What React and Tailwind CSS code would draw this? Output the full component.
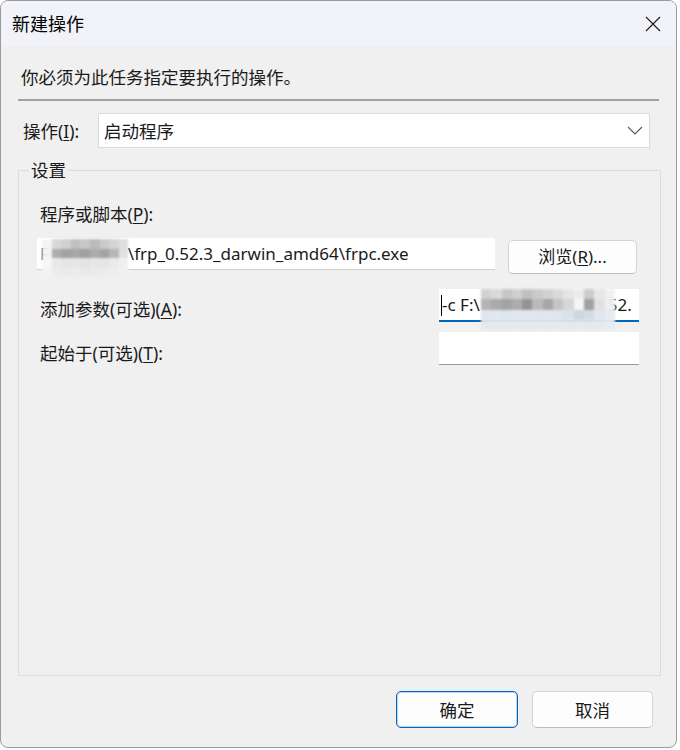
import React from "react";

const F = { fontFamily: '"Noto Sans", "Noto Sans CJK SC", sans-serif' };

function U({ children }) {
  return <span className="underline underline-offset-2 decoration-1">{children}</span>;
}

function Mosaic({ cells, cols, size }) {
  return (
    <div className="grid blur-[1px]" style={{ gridTemplateColumns: `repeat(${cols}, ${size}px)` }}>
      {cells.map((c, i) => (
        <div key={i} style={{ width: size, height: size, background: c }} />
      ))}
    </div>
  );
}

const pathCells = [
  "#f4f4f4", "#d6d6d6", "#cfcfcf", "#bdbdbd", "#c4c4c4", "#b8b8b8", "#c8c8c8", "#d2d2d2", "#dcdcdc",
  "#f2f2f2", "#a9a9a9", "#9e9e9e", "#a4a4a4", "#9b9b9b", "#a8a8a8", "#9f9f9f", "#b4b4b4", "#e0e0e0",
  "#f6f6f6", "#e8e8e8", "#e4e4e4", "#e6e6e6", "#e2e2e2", "#e6e6e6", "#e4e4e4", "#e9e9e9", "#f0f0f0",
  "#f3f3f3", "#ececec", "#ebebeb", "#ececec", "#eaeaea", "#ebebeb", "#ececec", "#eeeeee", "#f1f1f1",
];

const argCells = [
  "#cfcfcf", "#d8d8d8", "#c4c4c4", "#cdcdcd", "#bdbdbd", "#c8c8c8", "#d0d0d0", "#d8d8d8", "#e4e4e4", "#ececec", "#c9c9c9", "#e6e6e6", "#f0f0f0",
  "#b0b0b0", "#a6a6a6", "#9f9f9f", "#a9a9a9", "#8f8f8f", "#b7b7b7", "#a2a2a2", "#c2c2c2", "#d4d4d4", "#f6f6f6", "#9c9c9c", "#e0e0e0", "#f0f0f0",
  "#dde5ee", "#dfe6ef", "#dce4ee", "#e0e7ef", "#dfe6ee", "#dee5ee", "#e0e7ef", "#dde4ed", "#d8e0ea", "#ccd4de", "#d2dbe6", "#e0e6ee", "#e6ebf1",
  "#e6e8eb", "#e7e9ec", "#e6e8eb", "#e7e9ec", "#e6e8eb", "#e7e9ec", "#e6e8eb", "#e7e9ec", "#e6e8eb", "#e7e9ec", "#e6e8eb", "#e7e9ec", "#e9ebee",
];

export default function App() {
  return (
    <div className="w-[680px] h-[750px] bg-white text-[#1a1a1a]" style={F}>
      <div className="w-[677px] h-[748px] border border-[#9a9a9a] rounded-[8px] overflow-hidden flex flex-col bg-[#f0f0f0]">
        {/* title bar */}
        <div className="h-[45px] shrink-0 bg-[#f2f3f8] flex items-center justify-between pl-[11px] pr-[14px]">
          <span className="text-[18px] leading-[24px] text-black">新建操作</span>
          <svg width="16" height="16" viewBox="0 0 16 16" className="mr-[1px]">
            <path d="M1 1 L15 15 M15 1 L1 15" stroke="#1a1a1a" strokeWidth="1.1" fill="none" />
          </svg>
        </div>

        {/* body */}
        <div className="flex-1 flex flex-col pl-[17px] pr-[17px]">
          <div className="mt-[19px] ml-[3px] text-[17.5px] leading-[24px]">你必须为此任务指定要执行的操作。</div>
          <div className="mt-[10px] h-[2px] bg-[#a2a2a2] w-[641px]" />

          <div className="mt-[12px] flex items-center">
            <span className="ml-[5px] w-[75px] text-[17.5px] leading-[24px]">操作(<U>I</U>):</span>
            <div className="w-[552px] h-[35px] bg-white border border-[#dadada] flex items-center justify-between pl-[5px] pr-[6px]">
              <span className="text-[17.5px] leading-[24px]">启动程序</span>
              <svg width="16" height="9" viewBox="0 0 16 9">
                <path d="M1 1 L8 8 L15 1" stroke="#5a5a5a" strokeWidth="1.1" fill="none" />
              </svg>
            </div>
          </div>

          {/* group box */}
          <div className="relative mt-[22px] w-[643px] h-[506px] border border-[#dcdcdc] flex flex-col">
            <span className="absolute -top-[13px] left-[10px] bg-[#f0f0f0] px-[2px] text-[17.5px] leading-[24px]">设置</span>

            <div className="mt-[31px] ml-[21px] text-[17.5px] leading-[24px]">程序或脚本(<U>P</U>):</div>

            <div className="mt-[12px] ml-[18px] flex items-start">
              <div className="relative w-[458px] h-[32px] bg-white border-b border-[#cfcfcf] flex items-center pl-[3px] overflow-visible">
                <span className="text-[17px] leading-[24px] whitespace-nowrap">
                  F<span className="inline-block w-[79px]" />\frp_0.52.3_darwin_amd64\frpc.exe
                </span>
                <div className="absolute left-[5px] top-[1px] opacity-95">
                  <Mosaic cells={pathCells} cols={9} size={9.6} />
                </div>
              </div>
              <button className="ml-[13px] mt-[2px] w-[129px] h-[34px] rounded-[5px] bg-[#fdfdfd] border border-[#d3d3d3] border-b-[#bcbcbc] text-[17px] leading-[24px]">
                浏览(<U>R</U>)...
              </button>
            </div>

            <div className="mt-[15px] flex items-start justify-between pl-[21px] pr-[21px]">
              <span className="mt-[8px] text-[17.5px] leading-[24px]">添加参数(可选)(<U>A</U>):</span>
              <div className="relative w-[200px] h-[33px] bg-white border-b-2 border-[#0067c0] flex items-center pl-[3px] overflow-hidden">
                <span className="absolute left-[2px] top-[6px] w-[1px] h-[21px] bg-black" />
                <span className="text-[17px] leading-[24px] whitespace-nowrap">
                  -c F:\<span className="inline-block w-[128px]" />52.
                </span>
              </div>
            </div>
            <div className="relative h-0">
              <div className="absolute left-[462px] -top-[33px] opacity-95">
                <Mosaic cells={argCells} cols={13} size={10.3} />
              </div>
            </div>

            <div className="mt-[10px] flex items-start justify-between pl-[21px] pr-[21px]">
              <span className="mt-[9px] text-[17.5px] leading-[24px]">起始于(可选)(<U>T</U>):</span>
              <div className="w-[200px] h-[33px] bg-white border-b border-[#9a9a9a]" />
            </div>
          </div>

          <div className="mt-[15px] flex justify-end gap-[14px] pr-[6px]">
            <button className="w-[122px] h-[37px] rounded-[5px] bg-[#fdfdfd] border border-[#0067c0] shadow-[inset_0_0_0_1px_#bcd6f0] text-[17.5px] leading-[24px]">
              确定
            </button>
            <button className="w-[121px] h-[37px] rounded-[5px] bg-[#fdfdfd] border border-[#d3d3d3] border-b-[#bcbcbc] text-[17.5px] leading-[24px]">
              取消
            </button>
          </div>
        </div>
      </div>
    </div>
  );
}
